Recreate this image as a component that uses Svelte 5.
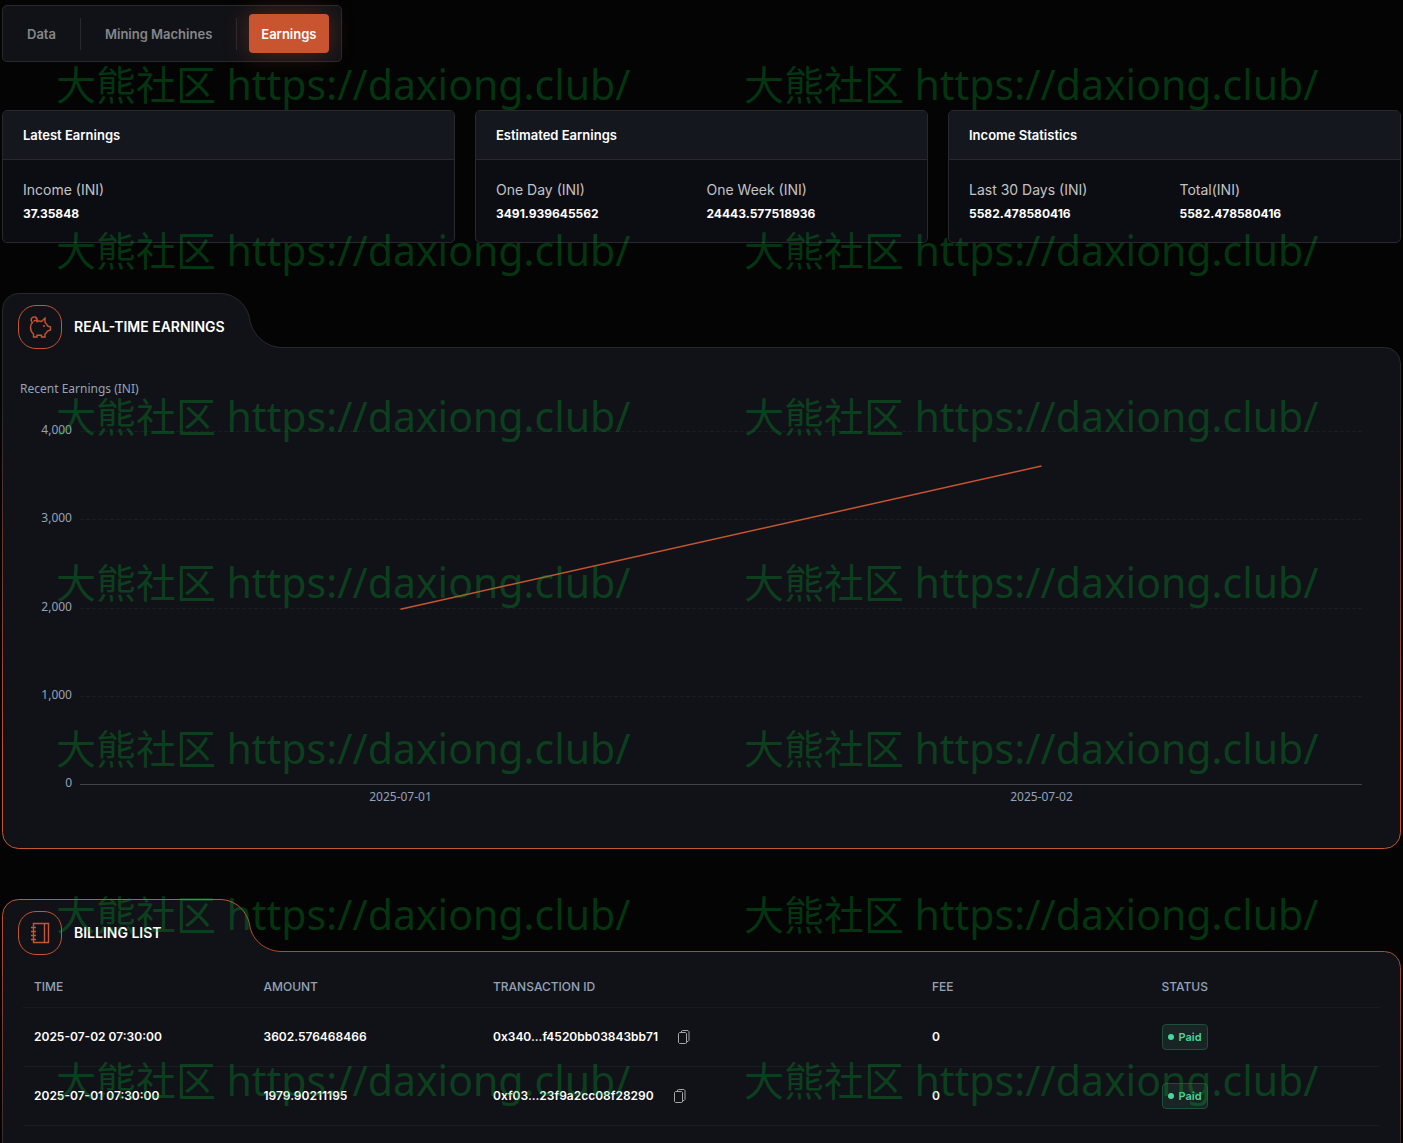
<script>
    const tabs = ["Data", "Mining Machines", "Earnings"];
    let active = $state("Earnings");

    const cards = [
        { title: "Latest Earnings", items: [["Income (INI)", "37.35848"]] },
        { title: "Estimated Earnings", items: [["One Day (INI)", "3491.939645562"], ["One Week (INI)", "24443.577518936"]] },
        { title: "Income Statistics", items: [["Last 30 Days (INI)", "5582.478580416"], ["Total(INI)", "5582.478580416"]] }
    ];

    const ticks = ["4,000", "3,000", "2,000", "1,000", "0"];
    const days = [
        { date: "2025-07-01", value: 1979.9 },
        { date: "2025-07-02", value: 3602.58 }
    ];

    const bills = [
        { time: "2025-07-02 07:30:00", amount: "3602.576468466", tx: "0x340...f4520bb03843bb71", fee: "0", status: "Paid" },
        { time: "2025-07-01 07:30:00", amount: "1979.90211195", tx: "0xf03...23f9a2cc08f28290", fee: "0", status: "Paid" }
    ];

    const marks = Array(14).fill("https://daxiong.club/");

    let chartW = $state(1399);
    let chartH = $state(556);
    let billW = $state(1399);
    let billH = $state(300);
    let plotW = $state(1283);
    const plotH = 353;

    let line = $derived(
        days.map((d, i) => `${(plotW * (i + 0.5)) / days.length},${plotH - (d.value / 4000) * plotH}`).join(" ")
    );

    // outline of a panel with a folder tab in the top left corner
    function outline(w, h, drop) {
        const r = w - 0.5;
        const b = h - 0.5;
        const y = drop + 0.5;
        return `M.5 16.5A16 16 0 0 1 16.5 .5H218C233 .5 246 12 248 28C251 42 264 ${y} 280 ${y}H${r - 16}A16 16 0 0 1 ${r} ${y + 16}V${b - 16}A16 16 0 0 1 ${r - 16} ${b}H16.5A16 16 0 0 1 .5 ${b - 16}Z`;
    }
</script>

<div class="page">
    <nav class="tabs">
        {#each tabs as tab}
        <button class:active={active === tab} onclick={() => active = tab}>{tab}</button>
        {/each}
    </nav>

    <section class="cards">
        {#each cards as card}
        <article class="card">
            <h2>{card.title}</h2>
            <dl>
                {#each card.items as [label, value]}
                <div>
                    <dt>{label}</dt>
                    <dd>{value}</dd>
                </div>
                {/each}
            </dl>
        </article>
        {/each}
    </section>

    <section class="panel" bind:clientWidth={chartW} bind:clientHeight={chartH}>
        <svg class="outline" width={chartW} height={chartH} aria-hidden="true">
            <defs>
                <linearGradient id="edge-chart" x1="0" y1="0" x2="0" y2="1">
                    <stop offset="0.2" stop-color="#29292d" />
                    <stop offset="0.85" stop-color="#c85430" />
                </linearGradient>
            </defs>
            <path d={outline(chartW, chartH, 54)} fill="#111217" stroke="url(#edge-chart)" />
        </svg>
        <header>
            <span class="badge">
                <svg width="24" height="24" viewBox="0 0 24 24">
                    <path d="M8.500 6.500Q11 5.500 13.500 6.500L17 3.200V7.500Q19 9 19.500 11L22.500 12V15L19.500 16Q18.500 18 17 19V22H13.500V20.300H9V22H5.500V19Q2.500 16.500 2.500 12.500Q2.500 9 4.500 7.500" />
                    <path d="M5 8Q2.500 6.500 3.300 3.800Q4.500 1.500 7 2Q9.700 3 9 6.200Q7.500 4.500 5.500 6.500" />
                    <circle cx="16" cy="11" r="1" class="dot" />
                </svg>
            </span>
            <h2>REAL-TIME EARNINGS</h2>
        </header>
        <div class="chart">
            <h3>Recent Earnings (INI)</h3>
            <div class="plot">
                <ul class="ticks">
                    {#each ticks as tick}
                    <li>{tick}</li>
                    {/each}
                </ul>
                <div class="area" bind:clientWidth={plotW}>
                    <svg width={plotW} height={plotH + 1}>
                        {#each ticks as tick, i}
                        <line x1="0" x2={plotW} y1={Math.round((plotH * i) / 4) + 0.5} y2={Math.round((plotH * i) / 4) + 0.5} class={i === 4 ? "axis" : "grid"} />
                        {/each}
                        <polyline points={line} />
                    </svg>
                    <ul class="days">
                        {#each days as day}
                        <li>{day.date}</li>
                        {/each}
                    </ul>
                </div>
            </div>
        </div>
    </section>

    <section class="panel billing" bind:clientWidth={billW} bind:clientHeight={billH}>
        <svg class="outline" width={billW} height={billH} aria-hidden="true">
            <defs>
                <linearGradient id="edge-bill" x1="0" y1="0" x2="0" y2="1">
                    <stop offset="0" stop-color="#c85430" />
                    <stop offset="1" stop-color="#29292d" />
                </linearGradient>
            </defs>
            <path d={outline(billW, billH, 52)} fill="#111217" stroke="url(#edge-bill)" />
        </svg>
        <header>
            <span class="badge">
                <svg width="24" height="24" viewBox="0 0 24 24">
                    <path d="M5.500 2.500H20.500V21.500H5.500ZM16.500 2.500V21.500M3 6.500H8M3 10.500H8M3 14.500H8M3 18.500H8" />
                </svg>
            </span>
            <h2>BILLING LIST</h2>
        </header>
        <table>
            <thead>
                <tr>
                    <th>TIME</th>
                    <th>AMOUNT</th>
                    <th class="wide">TRANSACTION ID</th>
                    <th>FEE</th>
                    <th>STATUS</th>
                </tr>
            </thead>
            <tbody>
                {#each bills as bill}
                <tr>
                    <td>{bill.time}</td>
                    <td>{bill.amount}</td>
                    <td>
                        <span class="tx">
                            {bill.tx}
                            <button class="copy" aria-label="Copy transaction ID">
                                <svg width="12" height="16" viewBox="0 0 12 16">
                                    <path d="M1.500 3.500H7.500L8.500 4.500V14L7.500 14.500H1.500L.5 13.500V4.500ZM3.500 3V2L4.500 1.500H10L11 2.500V11.500L10 12.500H9" />
                                </svg>
                            </button>
                        </span>
                    </td>
                    <td>{bill.fee}</td>
                    <td><span class="status">{bill.status}</span></td>
                </tr>
                {/each}
            </tbody>
        </table>
    </section>

    <div class="watermark" aria-hidden="true">
        {#each marks as mark}
        <span>大熊社区 <span class="site">{mark}</span></span>
        {/each}
    </div>
</div>

<style>
    :global(body) {
        background: #040404;
    }

    .page {
        position: relative;
        z-index: 0;
        padding: 5px 2px 0;
        overflow: hidden;
        color: #fff;
        font: 500 13px/16px Inter, sans-serif;
    }

    h2, h3, ul, dl, dd {
        margin: 0;
        padding: 0;
        font-size: inherit;
        list-style: none;
    }

    button {
        padding: 0;
        border: 0;
        background: none;
        color: inherit;
        font: inherit;
        cursor: pointer;
    }

    .tabs {
        display: inline-flex;
        align-items: center;
        box-sizing: border-box;
        height: 57px;
        padding: 0 12px;
        border: 1px solid #29292d;
        border-radius: 5px;
        background: #111217;
    }

    .tabs button {
        position: relative;
        height: 39px;
        margin-right: 25px;
        padding: 0 12px;
        border-radius: 4px;
        color: #85868a;
        font-weight: 600;
    }

    .tabs button:last-child {
        margin-right: 0;
    }

    .tabs button:not(:last-child)::after {
        content: "";
        position: absolute;
        top: 4px;
        right: -13px;
        width: 1px;
        height: 32px;
        background: #29292d;
    }

    .tabs .active {
        background: #c85430;
        box-shadow: 0 0 24px rgba(200, 84, 48, .35);
        color: #fff;
    }

    .cards {
        display: grid;
        grid-template-columns: repeat(3, 1fr);
        gap: 20px;
        margin-top: 48px;
    }

    .card {
        overflow: hidden;
        border: 1px solid #29292d;
        border-radius: 5px;
        background: #0c0d12;
    }

    .card h2 {
        padding: 16px 20px;
        border-bottom: 1px solid #29292d;
        background: #14171e;
        font-weight: 600;
    }

    .card dl {
        display: grid;
        grid-template-columns: 1fr 1fr;
        padding: 18px 10px 16px 20px;
        line-height: 24px;
    }

    .card dt {
        color: #c3c3c5;
        font-size: 14px;
        font-weight: 400;
    }

    .card dd {
        font-size: 12px;
        font-weight: 700;
    }

    .panel {
        position: relative;
        margin-top: 50px;
    }

    .outline {
        position: absolute;
        top: 0;
        left: 0;
        z-index: -1;
    }

    .panel header {
        display: flex;
        align-items: center;
        gap: 12px;
        padding: 12px 16px 0;
    }

    .panel header h2 {
        font-size: 14px;
        font-weight: 600;
    }

    .badge {
        display: grid;
        place-items: center;
        box-sizing: border-box;
        width: 44px;
        height: 44px;
        border: 1px solid #c85430;
        border-radius: 18px;
    }

    .badge svg {
        fill: none;
        stroke: #c85430;
        stroke-width: 1.4;
    }

    .badge .dot {
        fill: #c85430;
        stroke: none;
    }

    .chart {
        padding: 31px 39px 25px 18px;
        color: #94a3b8;
        font: 12px/18px "Noto Sans", sans-serif;
    }

    .chart h3 {
        font-weight: 400;
    }

    .plot {
        display: flex;
        gap: 8px;
        padding-top: 33px;
    }

    .ticks {
        display: flex;
        flex-direction: column;
        justify-content: space-between;
        width: 52px;
        height: 371px;
        margin-top: -10px;
        text-align: right;
    }

    .area {
        flex: 1;
        min-width: 0;
    }

    .area svg {
        display: block;
    }

    .area polyline {
        fill: none;
        stroke: #c85430;
        stroke-width: 1.5;
    }

    .grid {
        stroke: #1b1c21;
        stroke-dasharray: 4 2;
    }

    .axis {
        stroke: #424347;
    }

    .days {
        display: flex;
        padding: 3px 0 18px;
    }

    .days li {
        flex: 1;
        text-align: center;
    }

    .billing {
        padding-bottom: 40px;
    }

    table {
        width: calc(100% - 42px);
        margin: 12px 21px 0;
        border-collapse: collapse;
        table-layout: fixed;
    }

    th, td {
        padding: 0 11px;
        border-bottom: 1px solid #1a1b20;
        font-size: 12px;
        text-align: left;
    }

    th {
        height: 40px;
        color: #94a3b8;
        font-weight: 500;
    }

    th.wide {
        width: 417px;
    }

    td {
        height: 58px;
        font-weight: 600;
    }

    .tx {
        display: flex;
        align-items: center;
        gap: 20px;
    }

    .copy svg {
        display: block;
        fill: none;
        stroke: #a5a5a8;
    }

    .status {
        display: inline-flex;
        align-items: center;
        gap: 5px;
        box-sizing: border-box;
        height: 26px;
        padding: 0 5px;
        border: 1px solid #1d4d3b;
        border-radius: 4px;
        background: #182524;
        color: #4fd39a;
        font-size: 11px;
    }

    .status::before {
        content: "";
        width: 6px;
        height: 6px;
        border-radius: 50%;
        background: #4fd39a;
    }

    .watermark {
        position: absolute;
        top: 1px;
        left: 56px;
        display: grid;
        grid-template-columns: 688px 688px;
        grid-auto-rows: 166px;
        align-items: center;
        color: rgba(0, 180, 50, .28);
        font: 400 40px/48px "Noto Sans", "Noto Sans CJK SC", sans-serif;
        white-space: nowrap;
        pointer-events: none;
    }

    .site {
        font-size: 41px;
    }
</style>
